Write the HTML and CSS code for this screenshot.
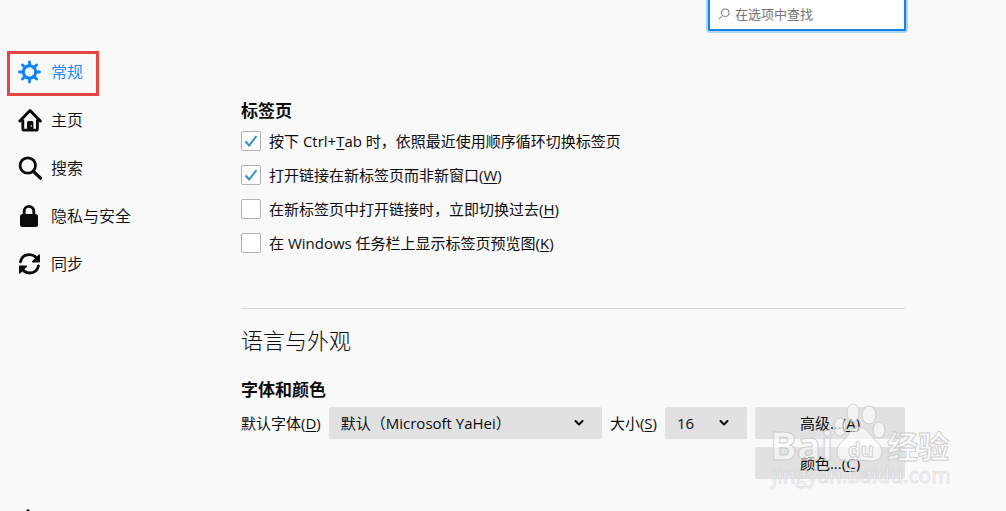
FILE: index.html
```html
<!DOCTYPE html>
<html lang="zh-CN">
<head>
<meta charset="utf-8">
<meta name="viewport" content="width=device-width, initial-scale=1">
<title>选项</title>
<link rel="stylesheet" href="styles.css">
</head>
<body>
<div class="page">
  <header class="topbar">
    <label class="search">
      <svg class="search-icon" viewBox="0 0 12 12" aria-hidden="true"><circle cx="7.3" cy="4.7" r="3.9"/><path d="M4.5 7.6 1 11"/></svg>
      <input class="search-input" type="text" placeholder="在选项中查找" aria-label="在选项中查找">
    </label>
  </header>
  <nav class="sidebar">
    <a class="nav-item active" href="#general">
      <svg class="nav-icon" viewBox="0 0 24 24" aria-hidden="true"><circle cx="11.500" cy="12" r="6.200" fill="none" stroke="currentColor" stroke-width="3"/><path d="M11.500 2v3M11.500 19v3M1.500 12h3M18.500 12h3M4.400 4.900l2.200 2.200M16.400 16.900l2.200 2.200M4.400 19.100l2.200-2.200M16.400 7.100l2.200-2.200" stroke="currentColor" stroke-width="2.800" stroke-linecap="round"/></svg>
      <span>常规</span>
    </a>
    <a class="nav-item" href="#home">
      <svg class="nav-icon" viewBox="0 0 24 24" aria-hidden="true"><path d="M1.900 13 12 2.500 22.300 13" fill="none" stroke="currentColor" stroke-width="3" stroke-linecap="round" stroke-linejoin="round"/><path d="M4.800 11.500v9.200q0 1.500 1.500 1.500h11.600q1.500 0 1.500-1.500v-9.200" fill="none" stroke="currentColor" stroke-width="2.800"/><path d="M9 23v-8.500q0-1.500 1.500-1.500h3.400q1.500 0 1.500 1.500V23z" fill="currentColor"/><circle cx="13.300" cy="18" r=".8" fill="#f9f9fa"/></svg>
      <span>主页</span>
    </a>
    <a class="nav-item" href="#search">
      <svg class="nav-icon" viewBox="0 0 24 24" aria-hidden="true"><circle cx="9.800" cy="9.500" r="7.700" fill="none" stroke="currentColor" stroke-width="2.800"/><path d="m15.500 15.500 7 6.700" stroke="currentColor" stroke-width="3.200" stroke-linecap="round"/></svg>
      <span>搜索</span>
    </a>
    <a class="nav-item" href="#privacy">
      <svg class="nav-icon" viewBox="0 0 24 24" aria-hidden="true"><rect x="2" y="10" width="18" height="13" rx="2.500" fill="currentColor"/><path d="M6.200 11V7.200a4.800 4.800 0 0 1 9.600 0V11" fill="none" stroke="currentColor" stroke-width="2.800"/></svg>
      <span>隐私与安全</span>
    </a>
    <a class="nav-item" href="#sync">
      <svg class="nav-icon" viewBox="0 0 24 24" aria-hidden="true"><path d="M2.500 9.800C3.500 5.200 7 2.600 11.300 2.600c3.500 0 6 1.500 7.500 4.200M20.500 13.800c-1 4.600-4.500 7.200-8.800 7.200-3.500 0-6-1.500-7.500-4.200" fill="none" stroke="currentColor" stroke-width="2.800" stroke-linecap="round"/><path d="M21.300 3v6.700h-6.700zM1.700 21v-6.700h6.700z" fill="currentColor" stroke="currentColor" stroke-width="1.400" stroke-linejoin="round"/></svg>
      <span>同步</span>
    </a>
    <a class="nav-more" href="#addons" aria-label="附加组件"><svg class="more-icon" viewBox="0 0 20 2" aria-hidden="true"><path d="M7.500 2V1.200Q8 .2 9 .2t1.500 1V2z" fill="currentColor"/></svg></a>
  </nav>
  <main class="content">
    <section class="tabs-group">
      <h2 class="group-title">标签页</h2>
      <label class="check-row"><span class="check"><input class="box" type="checkbox" checked><svg class="tick" viewBox="0 0 20 20" aria-hidden="true"><path d="m4.500 10.500 3.600 4L15.500 5"/></svg></span><span>按下 Ctrl+<u>T</u>ab 时，依照最近使用顺序循环切换标签页</span></label>
      <label class="check-row"><span class="check"><input class="box" type="checkbox" checked><svg class="tick" viewBox="0 0 20 20" aria-hidden="true"><path d="m4.500 10.500 3.600 4L15.500 5"/></svg></span><span>打开链接在新标签页而非新窗口(<u>W</u>)</span></label>
      <label class="check-row"><span class="check"><input class="box" type="checkbox"><svg class="tick" viewBox="0 0 20 20" aria-hidden="true"><path d="m4.500 10.500 3.600 4L15.500 5"/></svg></span><span>在新标签页中打开链接时，立即切换过去(<u>H</u>)</span></label>
      <label class="check-row"><span class="check"><input class="box" type="checkbox"><svg class="tick" viewBox="0 0 20 20" aria-hidden="true"><path d="m4.500 10.500 3.600 4L15.500 5"/></svg></span><span>在 Windows 任务栏上显示标签页预览图(<u>K</u>)</span></label>
    </section>
    <section class="look-group">
      <h1 class="section-title">语言与外观</h1>
      <h2 class="group-title">字体和颜色</h2>
      <div class="font-grid">
        <label for="font">默认字体(<u>D</u>)</label>
        <span class="picker"><select class="select" id="font"><option>默认（Microsoft YaHei）</option></select><svg class="chevron" viewBox="0 0 10 6" aria-hidden="true"><path d="m1.500 1 3.500 3.500L8.500 1"/></svg></span>
        <label for="size">大小(<u>S</u>)</label>
        <span class="picker"><select class="select" id="size"><option>16</option></select><svg class="chevron" viewBox="0 0 10 6" aria-hidden="true"><path d="m1.500 1 3.500 3.500L8.500 1"/></svg></span>
        <div class="actions">
          <button class="button" type="button">高级...(<u>A</u>)</button>
          <button class="button" type="button">颜色...(<u>C</u>)</button>
          <svg class="watermark" viewBox="0 0 200 96" aria-hidden="true">
            <g class="mark">
              <text class="mark-brand" x="10" y="59">Bai</text>
              <ellipse cx="93" cy="12" rx="6" ry="9"/><ellipse cx="109" cy="14" rx="7" ry="9"/><ellipse cx="80" cy="26" rx="6" ry="9"/><ellipse cx="119" cy="29" rx="6" ry="8"/>
              <path d="M99 26c-8 0-9 7-14 12-6 5-8 8-8 13 0 8 7 10 13 9 6-1 12-1 18 0 8 1 14-2 14-9 0-6-4-9-8-13-5-5-7-12-15-12z"/>
              <text class="mark-cn" x="127" y="57">经验</text>
              <text class="mark-du" x="88" y="56">du</text>
            </g>
            <text class="mark-url" x="12" y="82">jingyan.baidu.com</text>
          </svg>
        </div>
      </div>
    </section>
  </main>
</div>
</body>
</html>
```
FILE: styles.css
```css
*,
*::before,
*::after { box-sizing: border-box; }

body {
  margin: 0;
  background: #f9f9fa;
  color: #0c0c0d;
  font: 15px/20px "Open Sans", "Noto Sans CJK SC", sans-serif;
}

.page {
  display: grid;
  grid-template-columns: 241px 1fr;
  grid-template-rows: auto 1fr;
  min-height: 100vh;
  padding-right: 100px;
}

.topbar {
  grid-column: 1 / -1;
  display: flex;
  justify-content: flex-end;
}

.search {
  display: flex;
  align-items: center;
  gap: 5px;
  width: 198px;
  height: 31px;
  padding: 0 8px 2px;
  border: 2px solid #1583e0;
  border-top: 0;
  border-radius: 0 0 2px 2px;
  background: #fff;
  box-shadow: 0 0 0 2px #a9d3fa;
}

.search-icon {
  width: 12px;
  height: 12px;
  fill: none;
  stroke: #777;
}

.search-input {
  flex: 1;
  min-width: 0;
  padding: 0;
  border: 0;
  outline: 0;
  background: none;
  font: inherit;
  font-size: 13px;
}

.search-input::placeholder { color: #757575; }

.sidebar {
  display: flex;
  flex-direction: column;
  padding-top: 17px;
}

.nav-item {
  position: relative;
  display: flex;
  align-items: center;
  gap: 9px;
  height: 48px;
  padding-left: 18px;
  color: inherit;
  font-size: 16px;
  font-weight: 350;
  text-decoration: none;
}

.nav-item.active { color: #0a84ff; }

.nav-item.active::after {
  content: "";
  position: absolute;
  top: 3px;
  left: 7px;
  width: 92px;
  height: 45px;
  border: 3px solid #e84444;
}

.nav-icon {
  width: 24px;
  height: 24px;
}

.nav-more {
  display: flex;
  margin-top: auto;
  padding-left: 19px;
  color: inherit;
}

.more-icon {
  width: 20px;
  height: 2px;
}

.content {
  padding: 68px 1px 0 0;
}

.group-title {
  margin: 0 0 1px;
  font-size: 17px;
  font-weight: 700;
  line-height: 24px;
}

.check-row {
  display: flex;
  align-items: center;
  gap: 8px;
  height: 34px;
}

.check {
  display: grid;
  width: 20px;
  height: 20px;
}

.box {
  grid-area: 1 / 1;
  width: 20px;
  height: 20px;
  margin: 0;
  appearance: none;
  border: 1px solid #b1b1b1;
  border-radius: 2px;
  background: #fff;
}

.tick {
  grid-area: 1 / 1;
  visibility: hidden;
  width: 20px;
  height: 20px;
  fill: none;
  stroke: #2e8fcd;
  stroke-width: 2;
  pointer-events: none;
}

.box:checked + .tick { visibility: visible; }

u { text-underline-offset: 2px; }

.look-group {
  margin-top: 48px;
  padding-top: 15px;
  border-top: 1px solid #d7d7db;
}

.section-title {
  margin: 0 0 22px;
  font-size: 22px;
  font-weight: 300;
  line-height: 32px;
}

.font-grid {
  display: grid;
  grid-template-columns: auto 1fr auto 82px 150px;
  align-items: start;
  gap: 8px;
  margin-top: 5px;
  line-height: 32px;
}

.picker { display: grid; }

.select {
  grid-area: 1 / 1;
  width: 100%;
  height: 32px;
  padding: 0 12px;
  appearance: none;
  border: 0;
  border-radius: 2px;
  background: #e1e1e2;
  color: inherit;
  font: inherit;
}

.chevron {
  grid-area: 1 / 1;
  place-self: center end;
  width: 10px;
  height: 6px;
  margin-right: 18px;
  fill: none;
  stroke: currentColor;
  stroke-width: 2;
  stroke-linecap: round;
  stroke-linejoin: round;
  pointer-events: none;
}

.actions {
  position: relative;
  display: grid;
  gap: 8px;
}

.button {
  height: 32px;
  padding: 0;
  border: 0;
  border-radius: 2px;
  background: #e1e1e2;
  color: inherit;
  font: inherit;
}

.watermark {
  position: absolute;
  top: -6px;
  left: 5px;
  width: 200px;
  height: 96px;
  pointer-events: none;
}

.mark {
  fill: #fff;
  fill-opacity: .6;
  stroke: #c4c4c4;
  stroke-opacity: .8;
}

.mark-brand { font: 700 40px "Open Sans", sans-serif; }
.mark-cn { font: 700 31px "Noto Sans CJK SC", sans-serif; }
.mark-du { font: 700 20px "Open Sans", sans-serif; }

.mark-url {
  font: 21px "Open Sans", sans-serif;
  fill: #fff;
  fill-opacity: .7;
  stroke: #c8c8c8;
  stroke-opacity: .5;
}
```
